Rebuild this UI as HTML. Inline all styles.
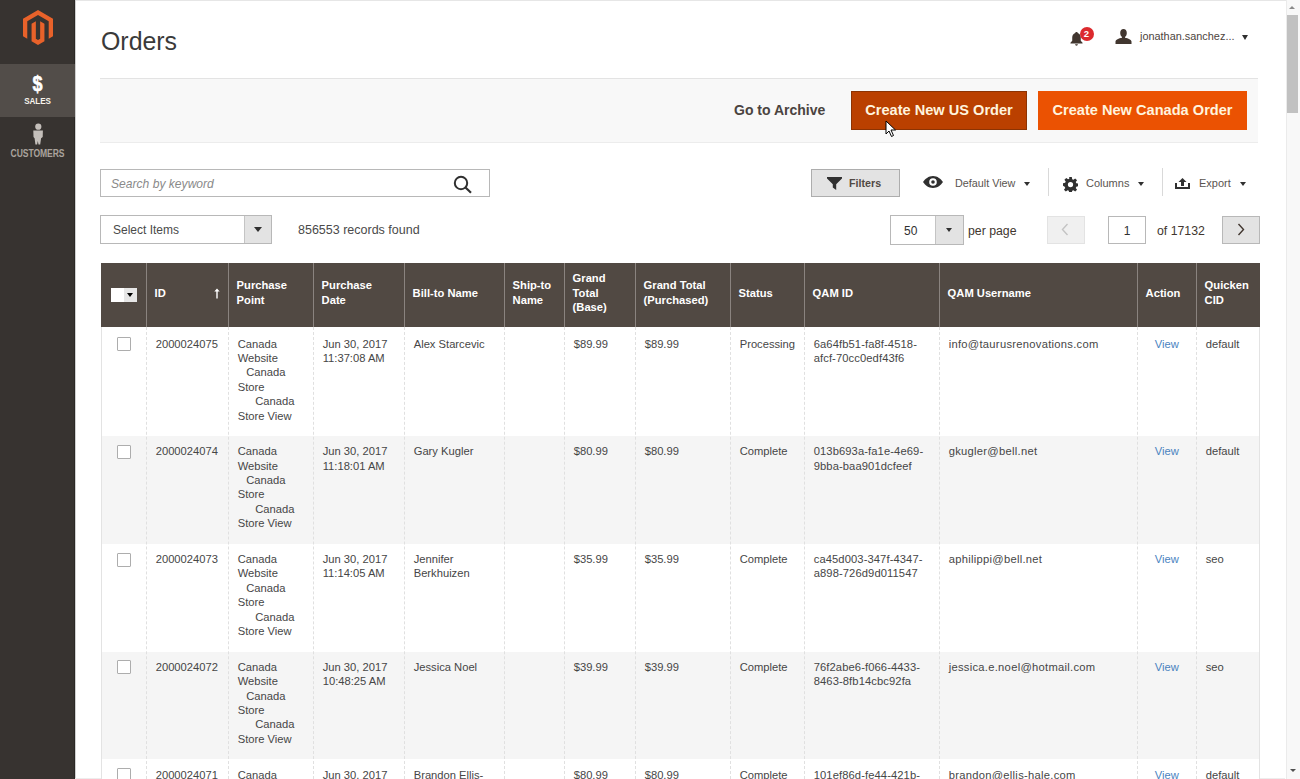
<!DOCTYPE html>
<html><head><meta charset="utf-8"><title>Orders</title>
<style>
*{margin:0;padding:0;box-sizing:border-box}
html,body{width:1300px;height:779px;overflow:hidden;background:#fff;font-family:"Liberation Sans",sans-serif;color:#303030}
.abs{position:absolute}
#side{position:absolute;left:0;top:0;width:75px;height:779px;background:#373330}
#side .edge{position:absolute;right:0;top:0;width:1px;height:779px;background:#2b2825}
#sales{position:absolute;left:0;top:64px;width:75px;height:53px;background:#524d49}
.navlbl{position:absolute;left:0;width:75px;text-align:center;font-weight:bold;font-size:8.9px;letter-spacing:-0.1px}
#topline{position:absolute;left:75px;top:0;width:1225px;height:1px;background:#e6e6e6}
#leftline{position:absolute;left:75px;top:0;width:1px;height:779px;background:#d0d0d0}
h1{position:absolute;left:101px;top:26px;font-weight:normal;font-size:24.9px;line-height:30px;color:#3a3a3a}
.actionbar{position:absolute;left:100px;top:78px;width:1158px;height:65px;background:#f8f8f8;border-top:1px solid #e3e3e3;border-bottom:1px solid #ececec}
.btn{position:absolute;height:39px;line-height:37px;font-weight:bold;font-size:14.6px;text-align:center;color:#fff4de}
.search{position:absolute;left:100px;top:169px;width:390px;height:28px;border:1px solid #b8b8b8;background:#fff}
.ph{position:absolute;font-style:italic;font-size:12.1px;color:#8a8a8a}
.sel{position:absolute;border:1px solid #b8b8b8;background:#fff}
.tog{position:absolute;top:0;right:0;bottom:0;background:#e3e3e3;border-left:1px solid #c4c4c4}
.tri{position:absolute;width:0;height:0;border-left:4px solid transparent;border-right:4px solid transparent;border-top:5px solid #303030}
.txt{position:absolute;white-space:nowrap;font-size:11px;line-height:14px}
.thead{position:absolute;background:#514943}
.hsep{position:absolute;width:1px;background:#8a837f}
.th>div{position:relative;top:-2px}
.th{position:absolute;display:flex;align-items:center;padding-left:8.6px;color:#fff;font-weight:bold;font-size:11.2px;line-height:14.3px}
.tr{position:absolute}
.td{position:absolute;padding:9.5px 9px 0 9.7px;font-size:11.2px;line-height:14.4px;color:#464646;white-space:nowrap}
.td .i1{padding-left:8.5px}
.td .i2{padding-left:17.5px}
.lnk{color:#4a83bf}
.vsep{position:absolute;width:0;border-left:1px dashed #e0e0e0}
.tright{position:absolute;width:1px;background:#e3e3e3}
.cb{position:absolute;left:117px;width:14px;height:14px;border:1px solid #adadad;background:#fff;border-radius:1px}
.msel{position:absolute;left:110.5px;top:288px;width:26px;height:13.5px}
.msel-w{position:absolute;left:0;top:0;width:13px;height:13.5px;background:#fff}
.msel-t{position:absolute;left:13px;top:0;width:13px;height:13.5px;background:#e6e6e6}
.msel-t:after{content:"";position:absolute;left:3px;top:5px;border-left:3.2px solid transparent;border-right:3.2px solid transparent;border-top:4.2px solid #000}
.sortarrow{position:absolute;left:213.5px;top:288px}
.scroll{position:absolute;left:1285.5px;top:0;width:14.5px;height:779px;background:#f8f8f8;border-left:1px solid #ebebeb}
.thumb{position:absolute;left:1287px;top:14.5px;width:11px;height:98px;background:#c1c1c1}

</style></head>
<body>
<div id="side">
  <div class="edge"></div>
  <svg class="abs" style="left:23px;top:10px" width="30" height="35" viewBox="1.609 0 20.782 24" preserveAspectRatio="none"><path fill="#e8622a" d="M12 24l-4.455-2.572v-12l2.97-1.715v12.001l1.485.902 1.485-.902V7.713l2.971 1.715v12L12 24zM22.391 6v12l-2.969 1.714V7.713L12 3.43 4.574 7.713v12.001L1.609 18V6L12 0l10.391 6z"/></svg>
  <div id="sales"></div>
  <div class="abs" style="left:0;top:71px;width:75px;text-align:center;color:#fff;font-weight:bold;font-size:22px;line-height:26px;transform:scaleX(0.82);-webkit-text-stroke:0.6px #fff">$</div>
  <div class="navlbl" style="top:95.7px;color:#f7f3eb;line-height:11px;transform:scaleX(0.91)">SALES</div>
  <svg class="abs" style="left:33px;top:123px" width="10" height="22" viewBox="0 0 10 22"><circle cx="5.3" cy="3.7" r="3.1" fill="#c4bfba"/><path fill="#c4bfba" d="M0.3 7.5h9.6l-0.2 6.5-1.6 1.3-0.9 6.2h-1.7l-0.7-3.5-0.7 3.5H2.4l-0.8-6.2L0.5 14z"/></svg>
  <div class="navlbl" style="top:148.2px;color:#aaa39d;line-height:12px;font-size:10.2px;transform:scaleX(0.84)">CUSTOMERS</div>
</div>
<div id="topline"></div>
<div id="leftline"></div>
<h1>Orders</h1>

<!-- header right -->
<svg class="abs" style="left:1069.5px;top:30.5px" width="13" height="15" viewBox="0 0 14 16"><path fill="#41362f" d="M7 1c.8 0 1.3.5 1.3 1.1 2.2.6 3.3 2.5 3.3 4.9v3.5l1.9 2.2v.8H.5v-.8l1.9-2.2V7c0-2.4 1.1-4.3 3.3-4.9C5.7 1.5 6.2 1 7 1zM5.5 14.2h3c0 .9-.6 1.5-1.5 1.5s-1.5-.6-1.5-1.5z"/></svg>
<div class="abs" style="left:1079.5px;top:27px;width:14px;height:14px;border-radius:50%;background:#dc2a2e;color:#fff;font-weight:bold;font-size:9.5px;line-height:14px;text-align:center">2</div>
<svg class="abs" style="left:1114.5px;top:29px" width="17" height="15" viewBox="0 0 17 15"><path fill="#41362f" d="M8.5 0c2 0 3.3 1.6 3.3 3.9 0 1.8-.8 3.3-1.8 4v.8c3.2.6 6.5 1.8 6.5 3.9V15H.5v-2.4c0-2.1 3.3-3.3 6.5-3.9v-.8c-1-.7-1.8-2.2-1.8-4C5.2 1.6 6.5 0 8.5 0z"/></svg>
<div class="txt" style="left:1140px;top:29px;font-size:10.9px;color:#4d4540">jonathan.sanchez...</div>
<div class="tri" style="left:1241.5px;top:35px;border-left-width:3.5px;border-right-width:3.5px;border-top-width:5px"></div>

<!-- action bar -->
<div class="actionbar"></div>
<div class="abs" style="left:734px;top:102px;font-weight:bold;font-size:14.0px;line-height:17px;color:#4a4340;white-space:nowrap">Go to Archive</div>
<div class="btn" style="left:851px;top:91px;width:176px;background:#ba4000;border:1px solid #8c3303">Create New US Order</div>
<div class="btn" style="left:1038px;top:91px;width:209px;background:#eb5202;border:1px solid #eb5202">Create New Canada Order</div>
<svg class="abs" style="left:885px;top:120px" width="12" height="18" viewBox="0 0 12 18"><path d="M1 1v13l3-3 2.5 5.5 2-1L6 10h4.5z" fill="#fff" stroke="#000" stroke-width="1"/></svg>

<!-- search -->
<div class="search"></div>
<div class="ph" style="left:111px;top:177px;line-height:14px">Search by keyword</div>
<svg class="abs" style="left:453px;top:175px" width="20" height="19" viewBox="0 0 20 19"><circle cx="8" cy="8" r="6.2" fill="none" stroke="#303030" stroke-width="2"/><path d="M12.5 12.5l5.5 5.3" stroke="#303030" stroke-width="2.2"/></svg>

<!-- select items -->
<div class="sel" style="left:100px;top:215px;width:172px;height:29px"><div class="tog" style="width:27px"></div></div>
<div class="tri" style="left:254px;top:227px"></div>
<div class="txt" style="left:113px;top:223px;font-size:12px;color:#4a4a4a">Select Items</div>
<div class="txt" style="left:298px;top:223px;font-size:12.5px;color:#4a4a4a">856553 records found</div>

<!-- toolbar -->
<div class="abs" style="left:811px;top:169px;width:89px;height:28px;background:#e3e3e3;border:1px solid #adadad"></div>
<svg class="abs" style="left:827px;top:177px" width="15" height="13" viewBox="0 0 15 13"><path fill="#303030" d="M0 0h15v1.5L9.2 7.3V13L5.8 10.5V7.3L0 1.5z"/></svg>
<div class="txt" style="left:849px;top:176px;font-weight:bold;font-size:10.7px;color:#514943">Filters</div>
<svg class="abs" style="left:923px;top:176px" width="20" height="12" viewBox="0 0 20 12"><path fill="#303030" d="M10 0C5.5 0 2 3 0 6c2 3 5.5 6 10 6s8-3 10-6c-2-3-5.5-6-10-6zm0 2.2a3.8 3.8 0 110 7.6 3.8 3.8 0 010-7.6z"/><circle cx="10" cy="6" r="1.8" fill="#303030"/></svg>
<div class="txt" style="left:955px;top:176px;font-size:10.8px;color:#5a5450">Default View</div>
<div class="tri" style="left:1024px;top:182px;border-left-width:3.5px;border-right-width:3.5px;border-top-width:4.5px"></div>
<div class="abs" style="left:1048px;top:168px;width:1px;height:28px;background:#d9d9d9"></div>
<svg class="abs" style="left:1062.5px;top:176.5px" width="15" height="15" viewBox="0 0 16 16"><path fill="#303030" d="M6.6 0h2.8l.4 2.3 1.3.6 1.9-1.4 2 2-1.4 1.9.6 1.3 2.3.4v2.8l-2.3.4-.6 1.3 1.4 1.9-2 2-1.9-1.4-1.3.6-.4 2.3H6.6l-.4-2.3-1.3-.6-1.9 1.4-2-2 1.4-1.9-.6-1.3L0 9.4V6.6l2.3-.4.6-1.3L1.5 3l2-2 1.9 1.4 1.3-.6zM8 5.2a2.8 2.8 0 100 5.6 2.8 2.8 0 000-5.6z"/></svg>
<div class="txt" style="left:1086px;top:176px;font-size:11px;color:#5a5450">Columns</div>
<div class="tri" style="left:1138px;top:182px;border-left-width:3.5px;border-right-width:3.5px;border-top-width:4.5px"></div>
<div class="abs" style="left:1162px;top:168px;width:1px;height:28px;background:#d9d9d9"></div>
<svg class="abs" style="left:1175px;top:178px" width="15" height="11" viewBox="0 0 15 11"><path fill="#303030" d="M7.5 0l4 4H9v4H6V4H3.5z"/><path fill="#303030" d="M0 5h2v4h11V5h2v6H0z"/></svg>
<div class="txt" style="left:1199px;top:176px;font-size:11px;color:#5a5450">Export</div>
<div class="tri" style="left:1240px;top:182px;border-left-width:3.5px;border-right-width:3.5px;border-top-width:4.5px"></div>

<!-- pager -->
<div class="sel" style="left:890px;top:215px;width:74px;height:30px"><div class="tog" style="width:28px"></div></div>
<div class="tri" style="left:946px;top:228px;border-left-width:3.5px;border-right-width:3.5px;border-top-width:4.5px"></div>
<div class="txt" style="left:904px;top:224px;font-size:12px">50</div>
<div class="txt" style="left:968px;top:224px;font-size:12.3px;color:#41362f">per page</div>
<div class="abs" style="left:1047px;top:216px;width:38px;height:28px;background:#f0f0f0;border:1px solid #e3e3e3"></div>
<svg class="abs" style="left:1061px;top:223px" width="8" height="13" viewBox="0 0 8 13"><path d="M6.5 1L1.5 6.5l5 5.5" fill="none" stroke="#c4c4c4" stroke-width="1.4"/></svg>
<div class="abs" style="left:1108px;top:216px;width:38px;height:28px;background:#fff;border:1px solid #b8b8b8"></div>
<div class="txt" style="left:1108px;top:224px;width:38px;text-align:center;font-size:12px">1</div>
<div class="txt" style="left:1157px;top:224px;font-size:12.3px;color:#41362f">of 17132</div>
<div class="abs" style="left:1222px;top:216px;width:38px;height:28px;background:#e3e3e3;border:1px solid #b8b8b8"></div>
<svg class="abs" style="left:1237px;top:223px" width="8" height="13" viewBox="0 0 8 13"><path d="M1.5 1l5 5.5-5 5.5" fill="none" stroke="#41362f" stroke-width="1.4"/></svg>

<div class="scroll"></div>
<div class="thumb"></div>
<div class="tri" style="left:1289px;top:5.5px;border-top:0;border-bottom:3.5px solid #8a8a8a;border-left-width:3.5px;border-right-width:3.5px"></div>
<div class="tri" style="left:1289.5px;top:769px;border-top:3.5px solid #505050;border-left-width:3.5px;border-right-width:3.5px"></div>
<div class="abs" style="left:75px;top:778px;width:1210px;height:1px;background:#ededed"></div>


<div class="thead" style="left:101px;top:262.5px;width:1158.5px;height:64.5px"></div>
<div class="hsep" style="left:146px;top:262.5px;height:64.5px"></div>
<div class="hsep" style="left:228px;top:262.5px;height:64.5px"></div>
<div class="hsep" style="left:313px;top:262.5px;height:64.5px"></div>
<div class="hsep" style="left:404px;top:262.5px;height:64.5px"></div>
<div class="hsep" style="left:504px;top:262.5px;height:64.5px"></div>
<div class="hsep" style="left:564px;top:262.5px;height:64.5px"></div>
<div class="hsep" style="left:635px;top:262.5px;height:64.5px"></div>
<div class="hsep" style="left:730px;top:262.5px;height:64.5px"></div>
<div class="hsep" style="left:804px;top:262.5px;height:64.5px"></div>
<div class="hsep" style="left:939px;top:262.5px;height:64.5px"></div>
<div class="hsep" style="left:1137px;top:262.5px;height:64.5px"></div>
<div class="hsep" style="left:1196px;top:262.5px;height:64.5px"></div>
<div class="th" style="left:146px;top:262.5px;width:82px;height:64.5px"><div>ID</div></div>
<div class="th" style="left:228px;top:262.5px;width:85px;height:64.5px"><div>Purchase<br>Point</div></div>
<div class="th" style="left:313px;top:262.5px;width:91px;height:64.5px"><div>Purchase<br>Date</div></div>
<div class="th" style="left:404px;top:262.5px;width:100px;height:64.5px"><div>Bill-to Name</div></div>
<div class="th" style="left:504px;top:262.5px;width:60px;height:64.5px"><div>Ship-to<br>Name</div></div>
<div class="th" style="left:564px;top:262.5px;width:71px;height:64.5px"><div>Grand<br>Total<br>(Base)</div></div>
<div class="th" style="left:635px;top:262.5px;width:95px;height:64.5px"><div>Grand Total<br>(Purchased)</div></div>
<div class="th" style="left:730px;top:262.5px;width:74px;height:64.5px"><div>Status</div></div>
<div class="th" style="left:804px;top:262.5px;width:135px;height:64.5px"><div>QAM ID</div></div>
<div class="th" style="left:939px;top:262.5px;width:198px;height:64.5px"><div>QAM Username</div></div>
<div class="th" style="left:1137px;top:262.5px;width:59px;height:64.5px"><div>Action</div></div>
<div class="th" style="left:1196px;top:262.5px;width:63.5px;height:64.5px"><div>Quicken<br>CID</div></div>
<div class="msel"><div class="msel-w"></div><div class="msel-t"></div></div>
<svg class="sortarrow" width="6" height="11" viewBox="0 0 6 11"><path d="M3 0.5L0.3 3.6h2v7h1.4v-7h2z" fill="#fff"/></svg>
<div class="tr" style="left:101px;top:327.00px;width:1158.5px;height:108.50px;background:#ffffff"></div>
<div class="cb" style="top:337.00px"></div>
<div class="td" style="left:146px;top:327.00px;width:82px;">2000024075</div>
<div class="td" style="left:228px;top:327.00px;width:85px;">Canada<br>Website<br><span class="i1">Canada</span><br>Store<br><span class="i2">Canada</span><br>Store View</div>
<div class="td" style="left:313px;top:327.00px;width:91px;">Jun 30, 2017<br>11:37:08 AM</div>
<div class="td" style="left:404px;top:327.00px;width:100px;">Alex Starcevic</div>
<div class="td" style="left:504px;top:327.00px;width:60px;"></div>
<div class="td" style="left:564px;top:327.00px;width:71px;">$89.99</div>
<div class="td" style="left:635px;top:327.00px;width:95px;">$89.99</div>
<div class="td" style="left:730px;top:327.00px;width:74px;">Processing</div>
<div class="td" style="left:804px;top:327.00px;width:135px;letter-spacing:0.1px;">6a64fb51-fa8f-4518-<br>afcf-70cc0edf43f6</div>
<div class="td" style="left:939px;top:327.00px;width:198px;letter-spacing:0.28px;">info@taurusrenovations.com</div>
<div class="td" style="left:1137px;top:327.00px;width:59px;text-align:center"><span class="lnk">View</span></div>
<div class="td" style="left:1196px;top:327.00px;width:63.5px;">default</div>
<div class="tr" style="left:101px;top:435.50px;width:1158.5px;height:108.00px;background:#f5f5f5"></div>
<div class="cb" style="top:444.75px"></div>
<div class="td" style="left:146px;top:434.75px;width:82px;">2000024074</div>
<div class="td" style="left:228px;top:434.75px;width:85px;">Canada<br>Website<br><span class="i1">Canada</span><br>Store<br><span class="i2">Canada</span><br>Store View</div>
<div class="td" style="left:313px;top:434.75px;width:91px;">Jun 30, 2017<br>11:18:01 AM</div>
<div class="td" style="left:404px;top:434.75px;width:100px;">Gary Kugler</div>
<div class="td" style="left:504px;top:434.75px;width:60px;"></div>
<div class="td" style="left:564px;top:434.75px;width:71px;">$80.99</div>
<div class="td" style="left:635px;top:434.75px;width:95px;">$80.99</div>
<div class="td" style="left:730px;top:434.75px;width:74px;">Complete</div>
<div class="td" style="left:804px;top:434.75px;width:135px;letter-spacing:0.1px;">013b693a-fa1e-4e69-<br>9bba-baa901dcfeef</div>
<div class="td" style="left:939px;top:434.75px;width:198px;letter-spacing:0.28px;">gkugler@bell.net</div>
<div class="td" style="left:1137px;top:434.75px;width:59px;text-align:center"><span class="lnk">View</span></div>
<div class="td" style="left:1196px;top:434.75px;width:63.5px;">default</div>
<div class="tr" style="left:101px;top:543.50px;width:1158.5px;height:108.30px;background:#ffffff"></div>
<div class="cb" style="top:552.50px"></div>
<div class="td" style="left:146px;top:542.50px;width:82px;">2000024073</div>
<div class="td" style="left:228px;top:542.50px;width:85px;">Canada<br>Website<br><span class="i1">Canada</span><br>Store<br><span class="i2">Canada</span><br>Store View</div>
<div class="td" style="left:313px;top:542.50px;width:91px;">Jun 30, 2017<br>11:14:05 AM</div>
<div class="td" style="left:404px;top:542.50px;width:100px;">Jennifer<br>Berkhuizen</div>
<div class="td" style="left:504px;top:542.50px;width:60px;"></div>
<div class="td" style="left:564px;top:542.50px;width:71px;">$35.99</div>
<div class="td" style="left:635px;top:542.50px;width:95px;">$35.99</div>
<div class="td" style="left:730px;top:542.50px;width:74px;">Complete</div>
<div class="td" style="left:804px;top:542.50px;width:135px;letter-spacing:0.1px;">ca45d003-347f-4347-<br>a898-726d9d011547</div>
<div class="td" style="left:939px;top:542.50px;width:198px;letter-spacing:0.28px;">aphilippi@bell.net</div>
<div class="td" style="left:1137px;top:542.50px;width:59px;text-align:center"><span class="lnk">View</span></div>
<div class="td" style="left:1196px;top:542.50px;width:63.5px;">seo</div>
<div class="tr" style="left:101px;top:651.80px;width:1158.5px;height:107.00px;background:#f5f5f5"></div>
<div class="cb" style="top:660.25px"></div>
<div class="td" style="left:146px;top:650.25px;width:82px;">2000024072</div>
<div class="td" style="left:228px;top:650.25px;width:85px;">Canada<br>Website<br><span class="i1">Canada</span><br>Store<br><span class="i2">Canada</span><br>Store View</div>
<div class="td" style="left:313px;top:650.25px;width:91px;">Jun 30, 2017<br>10:48:25 AM</div>
<div class="td" style="left:404px;top:650.25px;width:100px;">Jessica Noel</div>
<div class="td" style="left:504px;top:650.25px;width:60px;"></div>
<div class="td" style="left:564px;top:650.25px;width:71px;">$39.99</div>
<div class="td" style="left:635px;top:650.25px;width:95px;">$39.99</div>
<div class="td" style="left:730px;top:650.25px;width:74px;">Complete</div>
<div class="td" style="left:804px;top:650.25px;width:135px;letter-spacing:0.1px;">76f2abe6-f066-4433-<br>8463-8fb14cbc92fa</div>
<div class="td" style="left:939px;top:650.25px;width:198px;letter-spacing:0.28px;">jessica.e.noel@hotmail.com</div>
<div class="td" style="left:1137px;top:650.25px;width:59px;text-align:center"><span class="lnk">View</span></div>
<div class="td" style="left:1196px;top:650.25px;width:63.5px;">seo</div>
<div class="tr" style="left:101px;top:758.80px;width:1158.5px;height:20.20px;background:#ffffff"></div>
<div class="cb" style="top:768.00px"></div>
<div class="td" style="left:146px;top:758.00px;width:82px;">2000024071</div>
<div class="td" style="left:228px;top:758.00px;width:85px;">Canada</div>
<div class="td" style="left:313px;top:758.00px;width:91px;">Jun 30, 2017</div>
<div class="td" style="left:404px;top:758.00px;width:100px;">Brandon Ellis-</div>
<div class="td" style="left:504px;top:758.00px;width:60px;"></div>
<div class="td" style="left:564px;top:758.00px;width:71px;">$80.99</div>
<div class="td" style="left:635px;top:758.00px;width:95px;">$80.99</div>
<div class="td" style="left:730px;top:758.00px;width:74px;">Complete</div>
<div class="td" style="left:804px;top:758.00px;width:135px;letter-spacing:0.1px;">101ef86d-fe44-421b-</div>
<div class="td" style="left:939px;top:758.00px;width:198px;letter-spacing:0.28px;">brandon@ellis-hale.com</div>
<div class="td" style="left:1137px;top:758.00px;width:59px;text-align:center"><span class="lnk">View</span></div>
<div class="td" style="left:1196px;top:758.00px;width:63.5px;">default</div>
<div class="vsep" style="left:146px;top:327px;height:452px"></div>
<div class="vsep" style="left:228px;top:327px;height:452px"></div>
<div class="vsep" style="left:313px;top:327px;height:452px"></div>
<div class="vsep" style="left:404px;top:327px;height:452px"></div>
<div class="vsep" style="left:504px;top:327px;height:452px"></div>
<div class="vsep" style="left:564px;top:327px;height:452px"></div>
<div class="vsep" style="left:635px;top:327px;height:452px"></div>
<div class="vsep" style="left:730px;top:327px;height:452px"></div>
<div class="vsep" style="left:804px;top:327px;height:452px"></div>
<div class="vsep" style="left:939px;top:327px;height:452px"></div>
<div class="vsep" style="left:1137px;top:327px;height:452px"></div>
<div class="vsep" style="left:1196px;top:327px;height:452px"></div>
<div class="tright" style="left:1258.5px;top:327px;height:452px"></div>
<div class="tright" style="left:101px;top:327px;height:452px"></div>
</body></html>
